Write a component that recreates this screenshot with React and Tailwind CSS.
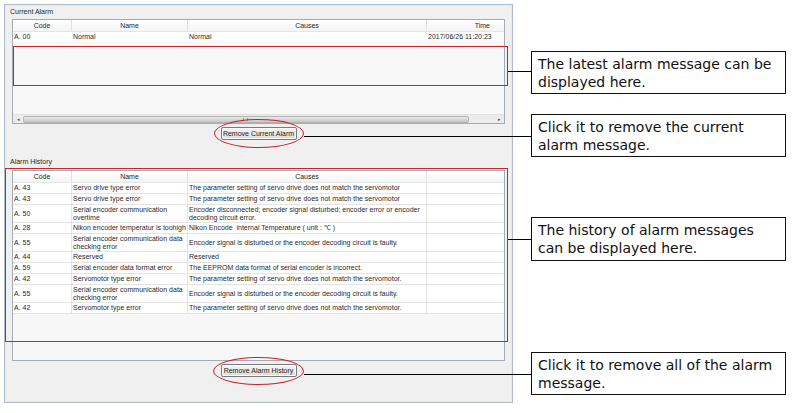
import React from 'react';

const history = [
  { code: 'A. 43', name: ['Servo drive type error'], causes: ['The parameter setting of servo drive does not match the servomotor'] },
  { code: 'A. 43', name: ['Servo drive type error'], causes: ['The parameter setting of servo drive does not match the servomotor'] },
  { code: 'A. 50', name: ['Serial encoder communication', 'overtime'], causes: ['Encoder disconnected; encoder signal disturbed; encoder error or encoder', 'decoding circuit error.'] },
  { code: 'A. 28', name: ['Nikon encoder temperatur is toohigh'], causes: ['Nikon Encode  internal Temperature ( unit : \u2103 )'] },
  { code: 'A. 55', name: ['Serial encoder communication data', 'checking error'], causes: ['Encoder signal is disturbed or the encoder decoding circuit is faulty.'] },
  { code: 'A. 44', name: ['Reserved'], causes: ['Reserved'] },
  { code: 'A. 59', name: ['Serial encoder data format error'], causes: ['The EEPROM data format of serial encoder is incorrect.'] },
  { code: 'A. 42', name: ['Servomotor type error'], causes: ['The parameter setting of servo drive does not match the servomotor.'] },
  { code: 'A. 55', name: ['Serial encoder communication data', 'checking error'], causes: ['Encoder signal is disturbed or the encoder decoding circuit is faulty.'] },
  { code: 'A. 42', name: ['Servomotor type error'], causes: ['The parameter setting of servo drive does not match the servomotor.'] },
];

const Lines = ({ lines }) => (
  <div className="flex flex-col justify-center h-full pl-px leading-[8px] whitespace-pre overflow-hidden">
    {lines.map((l, i) => (
      <span key={i}>{l}</span>
    ))}
  </div>
);

const Header = ({ last }) => (
  <div className="flex h-[12px] shrink-0 bg-gradient-to-b from-white to-[#f3f4f6] border-b border-[#e3e5e8] leading-[12px]">
    <div className="w-[59px] border-r border-[#e0e2e5] text-center">Code</div>
    <div className="w-[116px] border-r border-[#e0e2e5] text-center">Name</div>
    <div className="w-[239px] border-r border-[#e0e2e5] text-center">Causes</div>
    <div className="flex-1 text-right pr-[14px]">{last}</div>
  </div>
);

const WinButton = ({ children }) => (
  <button className="h-[13px] w-[76px] rounded-[2px] border border-[#7a7a7a] bg-gradient-to-b from-[#f6f6f6] to-[#dcdcdc] text-[7px] leading-[11px] text-[#222] shadow-[inset_0_0_0_1px_#fbfbfb]">
    {children}
  </button>
);

const Callout = ({ className, children }) => (
  <div className={`h-[43px] border border-[#111] bg-white px-[6px] pt-[3px] text-[14px] leading-[18px] text-[#111] ${className}`}>
    {children}
  </div>
);

export default function App() {
  return (
    <div className="relative flex w-[792px] h-[413px] bg-white overflow-hidden font-['Liberation_Sans',Arial,sans-serif]">
      {/* application window */}
      <div className="ml-[4px] mt-[4px] w-[509px] h-[399px] border border-[#aebccb] bg-[#f0f0f0] flex flex-col text-[7px] text-[#2a2a2a] shadow-[inset_0_0_0_1px_#e4eaf0]">
        <div className="h-[14px] pl-[5px] pt-[1px] leading-[11px]">Current Alarm</div>

        {/* current alarm table */}
        <div className="ml-[7px] w-[493px] h-[105px] border border-[#a3acb6] bg-[#f8f8f8] flex flex-col">
          <Header last="Time" />
          <div className="flex h-[9px] bg-white leading-[9px]">
            <div className="w-[59px] pl-px">A. 00</div>
            <div className="w-[116px] pl-px">Normal</div>
            <div className="w-[239px] pl-px">Normal</div>
            <div className="flex-1 pl-px whitespace-nowrap">2017/06/26 11:20:23</div>
          </div>
          <div className="flex-1" />
          <div className="flex h-[9px] items-center bg-[#ececec] border-t border-[#e2e2e2]">
            <div className="w-[10px] text-center text-[5px] leading-[8px] text-[#555]">◂</div>
            <div className="relative w-[446px] h-[7px] rounded-[2px] border border-[#b3b3b3] bg-gradient-to-b from-[#e9e9e9] to-[#c6c6c6]">
              <div className="absolute left-[219px] top-[1px] w-[5px] h-[3px] border-x border-[#8f8f8f]" />
            </div>
            <div className="flex-1" />
            <div className="w-[10px] text-center text-[5px] leading-[8px] text-[#555]">▸</div>
          </div>
        </div>

        <div className="flex justify-center mt-[3px]">
          <WinButton>Remove Current Alarm</WinButton>
        </div>

        <div className="h-[11px] mt-[16px] pl-[5px] leading-[11px]">Alarm History</div>

        {/* alarm history table */}
        <div className="ml-[7px] mt-[3px] w-[493px] h-[191px] border border-[#a3acb6] bg-[#f7f7f7] flex flex-col">
          <Header last="" />
          {history.map((r, i) => (
            <div
              key={i}
              className={`flex shrink-0 bg-white border-b border-[#e4e4e4] ${r.name.length > 1 || r.causes.length > 1 ? 'h-[18px]' : 'h-[11px]'}`}
            >
              <div className="w-[59px] border-r border-[#e4e4e4]">
                <Lines lines={[r.code]} />
              </div>
              <div className="w-[116px] border-r border-[#e4e4e4]">
                <Lines lines={r.name} />
              </div>
              <div className="w-[239px] border-r border-[#e4e4e4]">
                <Lines lines={r.causes} />
              </div>
              <div className="flex-1" />
            </div>
          ))}
        </div>

        <div className="flex justify-center mt-[3px]">
          <WinButton>Remove Alarm History</WinButton>
        </div>
      </div>

      {/* callouts */}
      <div className="ml-[18px] w-[255px] flex flex-col font-['DejaVu_Sans',Verdana,sans-serif]">
        <Callout className="mt-[51px]">The latest alarm message can be displayed here.</Callout>
        <Callout className="mt-[20px]">Click it to remove the current alarm message.</Callout>
        <Callout className="mt-[60px] h-[44px]">The history of alarm messages can be displayed here.</Callout>
        <Callout className="mt-[91px]">Click it to remove all of the alarm message.</Callout>
      </div>

      {/* annotation marks */}
      <div className="absolute left-[13px] top-[46px] w-[495px] h-[40px] border border-[#c8232c]" />
      <div className="absolute left-[214px] top-[119px] w-[90px] h-[29px] rounded-[50%] border border-[#c8232c]" />
      <div className="absolute left-[5px] top-[168px] w-[503px] h-[174px] border border-[#c8232c]" />
      <div className="absolute left-[213px] top-[357px] w-[91px] h-[28px] rounded-[50%] border border-[#c8232c]" />

      <div className="absolute left-[508px] top-[71px] w-[23px] h-px bg-black" />
      <div className="absolute left-[304px] top-[136px] w-[227px] h-px bg-black" />
      <div className="absolute left-[508px] top-[239px] w-[24px] h-px bg-black" />
      <div className="absolute left-[304px] top-[374px] w-[228px] h-px bg-black" />
    </div>
  );
}
